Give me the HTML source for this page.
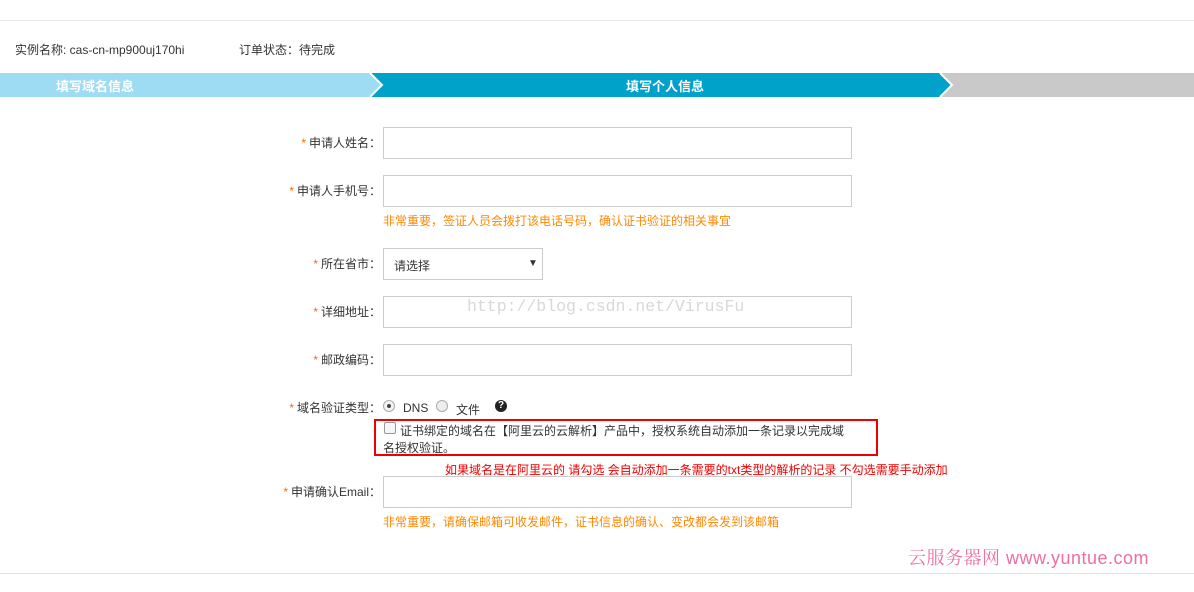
<!DOCTYPE html>
<html><head><meta charset="utf-8"><style>
body{margin:0;width:1194px;height:592px;background:#fff;position:relative;overflow:hidden;font-family:"Liberation Sans","Noto Sans CJK SC",sans-serif;font-size:12px;color:#333}
.a{position:absolute;white-space:nowrap}
.lab{position:absolute;right:813px;text-align:right;white-space:nowrap;line-height:14px}
.lab b{color:#f60;font-weight:normal;margin-right:3px}
.in{position:absolute;left:383px;width:469px;border:1px solid #ccc;box-sizing:border-box;height:32px}
.hint{position:absolute;left:383px;color:#f80;white-space:nowrap}
</style></head><body>
<div class="a" style="left:0;top:20px;width:1194px;height:1px;background:#e3e8ee"></div>
<div class="a" style="left:15px;top:41px">实例名称: cas-cn-mp900uj170hi</div>
<div class="a" style="left:239px;top:41px">订单状态：待完成</div>
<svg class="a" style="left:0;top:73px" width="1194" height="24">
<rect x="0" y="0" width="1194" height="24" fill="#c9c9c9"/>
<polygon points="0,0 370,0 382,12 370,24 0,24" fill="#9ddcf2"/>
<polygon points="370,0 940,0 952,12 940,24 370,24 382,12" fill="#00a2c9"/>
<polyline points="370,0 382,12 370,24" fill="none" stroke="#fff" stroke-width="2"/>
<polyline points="940,0 952,12 940,24" fill="none" stroke="#fff" stroke-width="2"/>
</svg>
<div class="a" style="left:56px;top:76px;color:#fff;font-size:13px;font-weight:bold">填写域名信息</div>
<div class="a" style="left:626px;top:76px;color:#fff;font-size:13px;font-weight:bold">填写个人信息</div>

<div class="lab" style="top:136px"><b>*</b>申请人姓名：</div>
<div class="in" style="top:127px"></div>
<div class="lab" style="top:184px"><b>*</b>申请人手机号：</div>
<div class="in" style="top:175px"></div>
<div class="hint" style="top:212px">非常重要，签证人员会拨打该电话号码，确认证书验证的相关事宜</div>
<div class="lab" style="top:257px"><b>*</b>所在省市：</div>
<div class="in" style="top:248px;width:160px"></div>
<div class="a" style="left:394px;top:257px">请选择</div>
<div class="a" style="left:528px;top:258px;font-size:10px">▼</div>
<div class="lab" style="top:305px"><b>*</b>详细地址：</div>
<div class="in" style="top:296px"></div>
<div class="a" style="left:467px;top:297px;font-family:'Liberation Mono',monospace;font-size:16.5px;color:#d8d8d8">http://blog.csdn.net/VirusFu</div>
<div class="lab" style="top:353px"><b>*</b>邮政编码：</div>
<div class="in" style="top:344px"></div>
<div class="lab" style="top:401px"><b>*</b>域名验证类型：</div>
<div class="a" style="left:383px;top:400px;width:10px;height:10px;border:1px solid #aaa;border-radius:50%;background:#f4f4f4"><div style="margin:3px;width:4px;height:4px;border-radius:50%;background:#444"></div></div>
<div class="a" style="left:403px;top:401px">DNS</div>
<div class="a" style="left:436px;top:400px;width:10px;height:10px;border:1px solid #aaa;border-radius:50%;background:#eee"></div>
<div class="a" style="left:456px;top:401px">文件</div>
<div class="a" style="left:495px;top:400px;width:12px;height:12px;border-radius:50%;background:#222;color:#fff;font-size:10px;font-weight:bold;text-align:center;line-height:12px">?</div>
<div class="a" style="left:374px;top:419px;width:504px;height:37px;border:2px solid #e00;box-sizing:border-box"></div>
<div class="a" style="left:384px;top:422px;width:10px;height:10px;border:1px solid #999;border-radius:2px;background:#f6f6f6"></div>
<div class="a" style="left:400px;top:422px">证书绑定的域名在【阿里云的云解析】产品中，授权系统自动添加一条记录以完成域</div>
<div class="a" style="left:383px;top:439px">名授权验证。</div>
<div class="a" style="left:445px;top:461px;color:#e00">如果域名是在阿里云的 请勾选 会自动添加一条需要的txt类型的解析的记录 不勾选需要手动添加</div>
<div class="lab" style="top:485px"><b>*</b>申请确认Email：</div>
<div class="in" style="top:476px"></div>
<div class="hint" style="top:513px">非常重要，请确保邮箱可收发邮件，证书信息的确认、变改都会发到该邮箱</div>
<div class="a" style="left:908px;top:544px;color:#ec6fa5;font-size:18px;font-family:'Liberation Sans','Noto Serif CJK SC',sans-serif;letter-spacing:0.5px">云服务器网 www.yuntue.com</div>
<div class="a" style="left:0;top:573px;width:1194px;height:1px;background:#e3e3e3"></div>
</body></html>
